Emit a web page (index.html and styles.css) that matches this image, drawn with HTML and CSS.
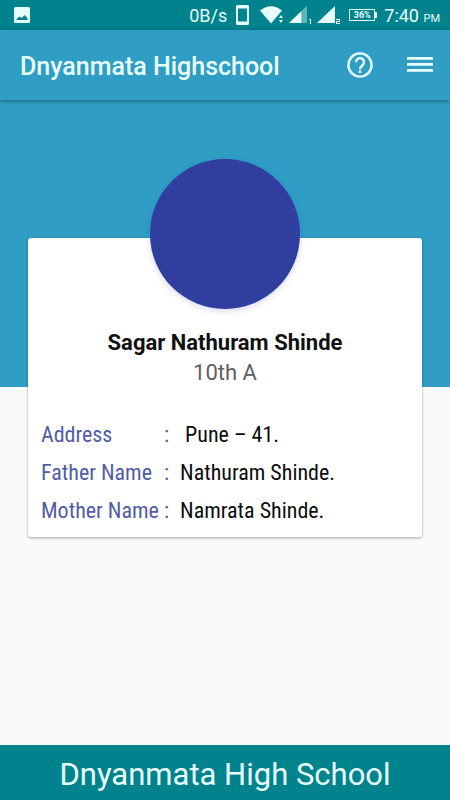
FILE: index.html
```html
<!DOCTYPE html>
<html lang="en">
<head>
<meta charset="utf-8">
<meta name="viewport" content="width=device-width, initial-scale=1">
<title>Dnyanmata Highschool</title>
<link rel="stylesheet" href="styles.css">
</head>
<body>
<div class="status">
  <svg class="status-photo" width="16" height="16" viewBox="0 0 16 16" aria-hidden="true"><path fill="currentColor" fill-rule="evenodd" d="M1.500 0h13A1.500 1.500 0 0 1 16 1.500v13a1.500 1.500 0 0 1-1.500 1.500h-13A1.500 1.500 0 0 1 0 14.500v-13A1.500 1.500 0 0 1 1.500 0zM2.500 13h11v-2L10.500 8 8 11 5.500 9.500l-3 2.500z"/></svg>
  <span class="status-rate">0B/s</span>
  <svg class="status-phone" width="13" height="20" viewBox="0 0 13 20" aria-hidden="true"><path fill="currentColor" fill-rule="evenodd" d="M1.500 0h10A1.500 1.500 0 0 1 13 1.500v17a1.500 1.500 0 0 1-1.500 1.500h-10A1.500 1.500 0 0 1 0 18.500v-17A1.500 1.500 0 0 1 1.500 0zM2 3.500v13h9v-13z"/></svg>
  <svg class="status-wifi" width="24" height="18" viewBox="0 0 24 18" aria-hidden="true"><path fill="currentColor" d="M0 4.500Q11 -4 22 4.500L11 17.500zM19 12l2-3 2 3zM19 14l2 3 2-3z"/></svg>
  <svg class="status-signal" width="23" height="18" viewBox="0 0 23 18" aria-hidden="true"><path fill="currentColor" opacity=".4" d="M12.500 5L18 0v17h-5.500z"/><path fill="currentColor" d="M0 17L12.500 5v12z"/><path fill="currentColor" d="M20 13h2v5h-1v-4h-1z"/></svg>
  <svg class="status-signal" width="23" height="18" viewBox="0 0 23 18" aria-hidden="true"><path fill="currentColor" d="M0 17L18 0v17z"/><path fill="currentColor" d="M19 13h4v3h-3v1h3v1h-4v-3h3v-1h-3z"/></svg>
  <span class="battery">36%</span>
  <span class="status-time">7:40 <small>PM</small></span>
</div>
<header class="appbar">
  <h1>Dnyanmata Highschool</h1>
  <button type="button" aria-label="Help"><svg width="26" height="26" viewBox="0 0 26 26" fill="none" stroke="currentColor" stroke-width="2.400" aria-hidden="true"><circle cx="13" cy="13" r="11.600"/><path d="M9 10.200a4 4 0 1 1 6.800 2.800c-1.700 1.500-2.800 2.200-2.800 4.200"/><path d="M13 18.400v2.600"/></svg></button>
  <button type="button" aria-label="Menu"><svg width="26" height="26" viewBox="0 0 26 26" aria-hidden="true"><path fill="currentColor" d="M0 5h26v2.800H0zM0 11h26v2.800H0zM0 17h26v2.800H0z"/></svg></button>
</header>
<main>
  <div class="banner"></div>
  <section class="card">
    <div class="avatar"></div>
    <h2>Sagar Nathuram Shinde</h2>
    <p class="grade">10th A</p>
    <dl>
      <dt>Address</dt><dd class="colon">:</dd><dd>&nbsp;Pune – 41.</dd>
      <dt>Father Name</dt><dd class="colon">:</dd><dd>Nathuram Shinde.</dd>
      <dt>Mother Name</dt><dd class="colon">:</dd><dd>Namrata Shinde.</dd>
    </dl>
  </section>
</main>
<footer>Dnyanmata High School</footer>
</body>
</html>
```
FILE: styles.css
```css
* { box-sizing: border-box; }
body {
  margin: 0;
  min-height: 100vh;
  display: flex;
  flex-direction: column;
  background: #fafafa;
  font-family: Roboto, sans-serif;
}
svg { display: block; flex: none; }
.status {
  height: 30px;
  padding: 0 10px 0 14px;
  display: flex;
  align-items: center;
  background: #00838d;
  color: #e8ffff;
}
.status-rate { margin-left: auto; font-size: 18px; }
.status-phone { margin-left: 9px; }
.status-wifi { margin-left: 11px; }
.status-signal { margin-left: 5px; }
.battery {
  position: relative;
  margin-left: 9px;
  width: 26px;
  height: 12px;
  border: 1px solid;
  font-size: 9px;
  font-weight: 700;
  line-height: 10px;
  text-align: center;
}
.battery::after {
  content: "";
  position: absolute;
  top: 2px;
  right: -3px;
  width: 2px;
  height: 6px;
  background: currentColor;
}
.status-time { margin-left: 9px; font-size: 18px; white-space: nowrap; }
.status-time small { font-size: 11px; }
.appbar {
  position: relative;
  height: 70px;
  padding: 0 17px 0 20px;
  display: flex;
  align-items: center;
  background: #2f9dc4;
  color: #e8ffff;
  box-shadow: 0 1px 4px rgba(0, 0, 0, .4);
}
h1 { margin: 2px auto 0 0; font-size: 25px; font-weight: 500; }
.appbar button { padding: 0; border: 0; background: none; color: inherit; }
.appbar button + button { margin-left: 34px; }
main { flex: 1; }
.banner { height: 287px; background: #2f9dc4; }
.card {
  margin: -149px 28px 24px;
  padding: 0 13px 7px;
  background: #fff;
  border-radius: 3px;
  box-shadow: 0 1px 3px rgba(0, 0, 0, .35);
  display: flow-root;
}
.avatar {
  width: 150px;
  height: 150px;
  margin: -79px auto 0;
  border-radius: 50%;
  background: #303e9f;
  box-shadow: 0 2px 6px rgba(48, 62, 159, .2);
}
h2 {
  margin: 19px 0 0;
  color: #111;
  font-size: 22px;
  font-weight: 700;
  line-height: 30px;
  text-align: center;
}
.grade {
  margin: 0;
  color: #606060;
  font-size: 22px;
  line-height: 30px;
  text-align: center;
}
dl {
  margin: 28px 0 0;
  display: grid;
  grid-template-columns: 123px 16px 1fr;
  font-family: "Roboto Condensed", Roboto, sans-serif;
  font-size: 22px;
  line-height: 38px;
  white-space: nowrap;
}
dt, .colon { color: #515ba8; }
dd { margin: 0; color: #0c0c0c; }
footer {
  padding: 12px 0 7px;
  background: #00838d;
  color: #e8ffff;
  font-size: 31px;
  line-height: 36px;
  text-align: center;
}
```
